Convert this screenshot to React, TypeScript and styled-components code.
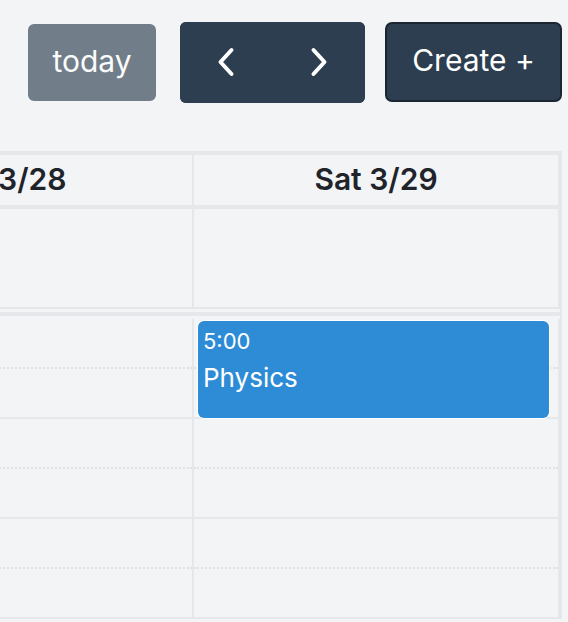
import React from "react";
import styled, { createGlobalStyle } from "styled-components";

const GlobalStyle = createGlobalStyle`
  html, body {
    margin: 0;
    padding: 0;
    background: #f3f4f6;
  }
  body {
    font-family: Inter, "Noto Sans", "Liberation Sans", sans-serif;
    color: #1f2329;
    overflow: hidden;
  }
`;

const BORDER = "#e5e7eb";

const Page = styled.div`
  width: 568px;
  height: 622px;
  overflow: hidden;
`;

const Toolbar = styled.div`
  display: flex;
  justify-content: flex-end;
  align-items: center;
  height: 80px;
  padding: 22px 6px 0 0;
  margin-bottom: 49px;
`;

const BaseButton = styled.button`
  display: flex;
  align-items: center;
  justify-content: center;
  border: 2px solid #2c3e50;
  border-radius: 6px;
  background: #2c3e50;
  color: #ffffff;
  font-family: inherit;
  font-size: 30px;
  font-weight: 400;
  padding: 0;
  cursor: pointer;
  box-sizing: border-box;
`;

const TodayButton = styled(BaseButton)`
  width: 128px;
  height: 77px;
  opacity: 0.65;
  margin-right: 24px;
  padding-bottom: 3px;
`;

const NavGroup = styled.div`
  display: flex;
  width: 185px;
  height: 81px;
  border-radius: 6px;
  overflow: hidden;
  background: #2c3e50;
  margin-right: 20px;
`;

const NavButton = styled(BaseButton)`
  flex: 1;
  height: 100%;
  border-radius: 0;
  border: none;
`;

const CreateButton = styled(BaseButton)`
  width: 177px;
  height: 80px;
  border-color: #1b2631;
  border-radius: 7px;
  padding-bottom: 4px;
`;

const Scroller = styled.div`
  width: 562px;
  overflow: hidden;
`;

const Table = styled.div`
  margin-left: -172px;
  width: 732px;
  border-top: 2px solid ${BORDER};
  border-right: 2px solid ${BORDER};
`;

const Row = styled.div`
  display: grid;
  grid-template-columns: 366px 366px;
`;

const HeadCell = styled.div`
  height: 48px;
  border-top: 2px solid ${BORDER};
  border-right: 2px solid ${BORDER};
  border-bottom: 2px solid ${BORDER};
  display: flex;
  align-items: center;
  justify-content: center;
  font-size: 30px;
  font-weight: 600;
  color: #20242a;
  padding-bottom: 2px;
  box-sizing: content-box;
`;

const AllDayCell = styled.div`
  height: 98px;
  border-top: 2px solid ${BORDER};
  border-right: 2px solid ${BORDER};
  border-bottom: 2px solid ${BORDER};
`;

const Divider = styled.div`
  height: 4px;
  margin-top: 3px;
  background: ${BORDER};
`;

const SlotsArea = styled(Row)`
  padding-top: 3px;
`;

const DayColumn = styled.div`
  position: relative;
  border-right: 2px solid ${BORDER};
`;

const Slot = styled.div<{ $major: boolean }>`
  height: 50px;
  box-sizing: border-box;
  border-bottom: 2px ${(p) => (p.$major ? "solid" : "dotted")}
    ${(p) => (p.$major ? BORDER : "#dfe1e5")};
`;

const Event = styled.div`
  position: absolute;
  top: 2px;
  left: 4px;
  right: 9px;
  height: 97px;
  background: #2e8cd7;
  border-radius: 6px;
  box-shadow: 0 0 0 1px #ffffff;
  color: #ffffff;
  padding: 5px 5px;
  box-sizing: border-box;
`;

const EventTime = styled.div`
  font-size: 22px;
  line-height: 30px;
`;

const EventTitle = styled.div`
  font-size: 26px;
  line-height: 36px;
  margin-top: 4px;
`;

const Chevron = ({ dir }: { dir: "left" | "right" }) => (
  <svg width="18" height="30" viewBox="0 0 18 30" fill="none">
    <polyline
      points={dir === "left" ? "14.5,3 3.5,15 14.5,27" : "3.5,3 14.5,15 3.5,27"}
      stroke="#ffffff"
      strokeWidth="4"
      strokeLinecap="round"
      strokeLinejoin="round"
    />
  </svg>
);

const days = ["Fri 3/28", "Sat 3/29"];
const slots = [false, true, false, true, false, true];

export default function App() {
  return (
    <Page>
      <GlobalStyle />
      <Toolbar>
        <TodayButton disabled>today</TodayButton>
        <NavGroup>
          <NavButton aria-label="prev">
            <Chevron dir="left" />
          </NavButton>
          <NavButton aria-label="next">
            <Chevron dir="right" />
          </NavButton>
        </NavGroup>
        <CreateButton>Create +</CreateButton>
      </Toolbar>
      <Scroller>
        <Table>
          <Row>
            {days.map((d) => (
              <HeadCell key={d}>{d}</HeadCell>
            ))}
          </Row>
          <Row>
            {days.map((d) => (
              <AllDayCell key={d} />
            ))}
          </Row>
          <Divider />
          <SlotsArea>
            {days.map((d, i) => (
              <DayColumn key={d}>
                {slots.map((major, j) => (
                  <Slot key={j} $major={major} />
                ))}
                {i === 1 && (
                  <Event>
                    <EventTime>5:00</EventTime>
                    <EventTitle>Physics</EventTitle>
                  </Event>
                )}
              </DayColumn>
            ))}
          </SlotsArea>
        </Table>
      </Scroller>
    </Page>
  );
}
